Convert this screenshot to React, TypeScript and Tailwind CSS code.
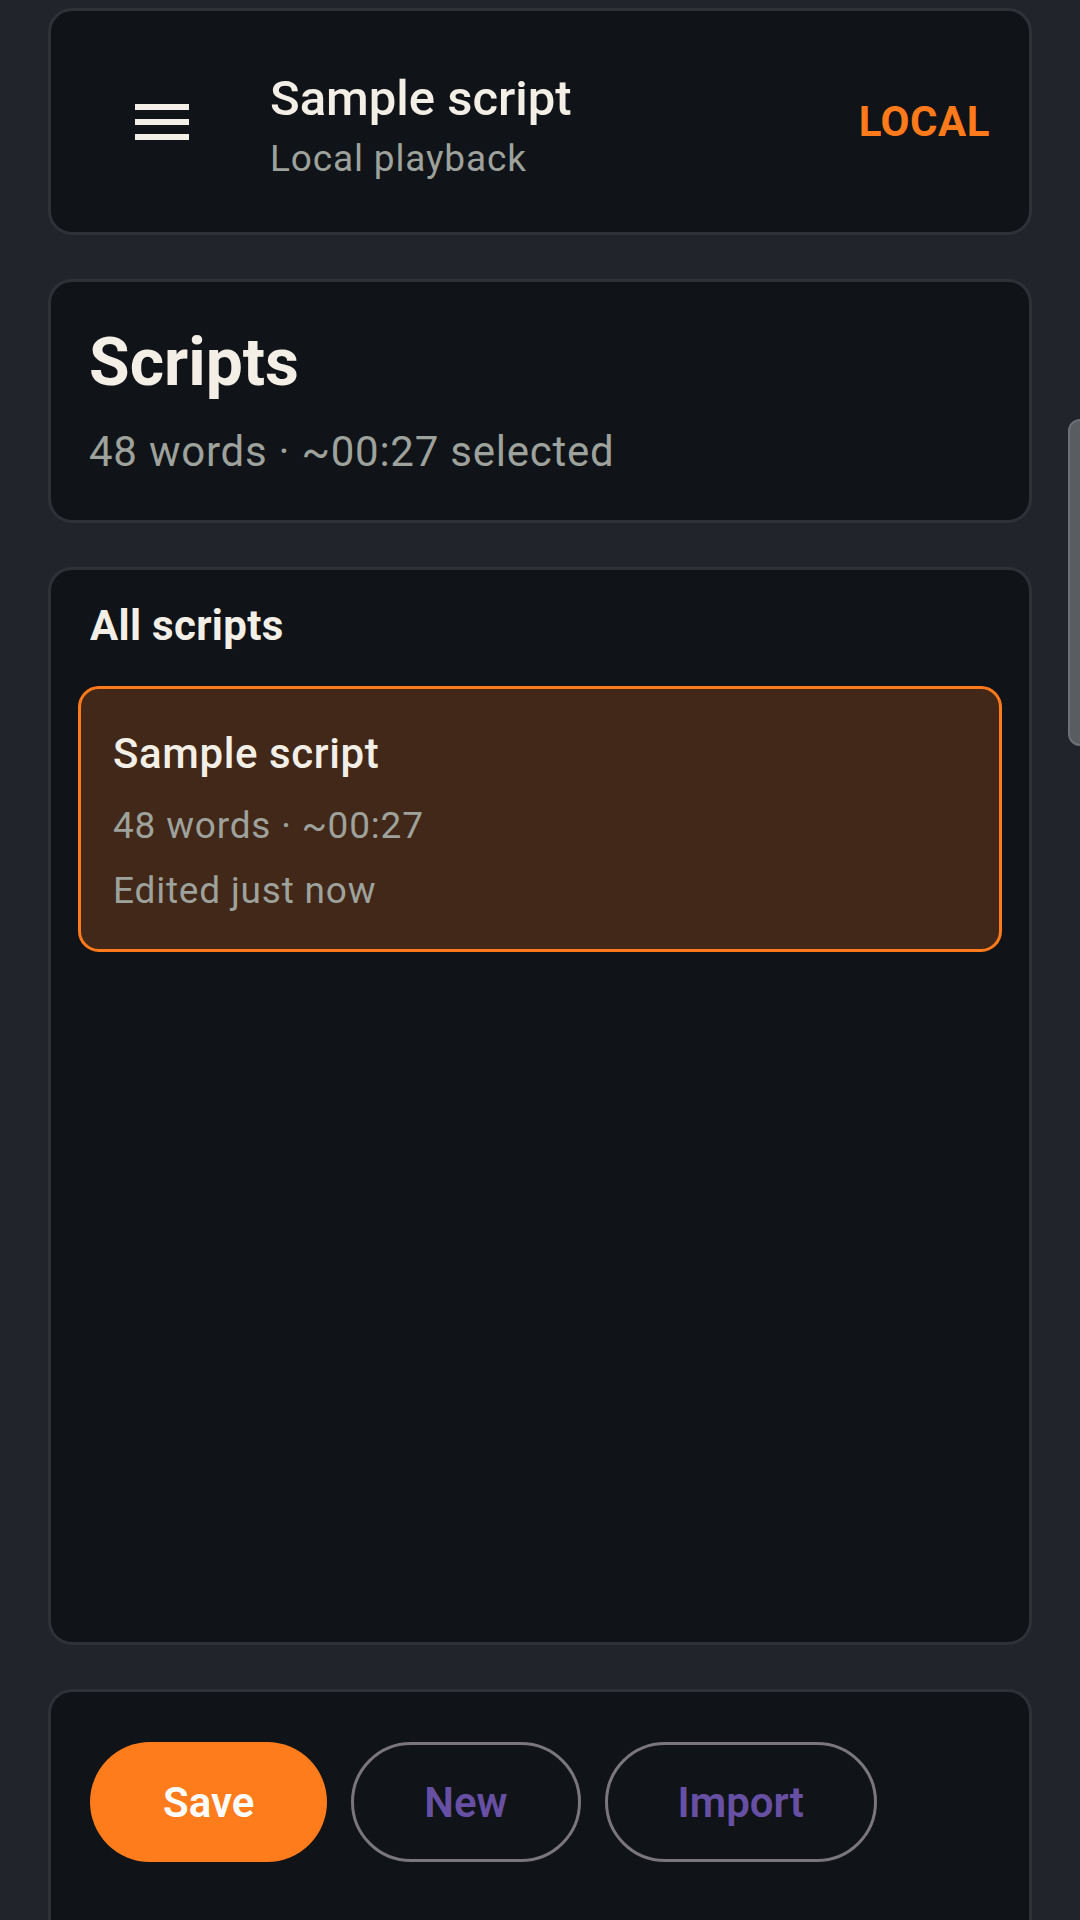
import React from "react";

function MenuIcon() {
  return (
    <svg width="72" height="72" viewBox="0 0 24 24" fill="#f3efe6">
      <path d="M3 18h18v-2H3v2zm0-5h18v-2H3v2zm0-7v2h18V6H3z" />
    </svg>
  );
}

export default function App() {
  return (
    <div
      className="relative h-[1920px] w-[1080px] overflow-hidden bg-[#21242b]"
      style={{ fontFamily: "Roboto, 'Noto Sans', sans-serif" }}
    >
      <div className="flex flex-col gap-[44px] px-[48px] pt-[8px]">
        {/* Header card */}
        <div className="flex h-[227px] items-center rounded-[24px] border-[3px] border-[#2e3136] bg-[#101317] pl-[75px] pr-[39px]">
          <MenuIcon />
          <div className="ml-[72px] mt-[7px] flex flex-1 flex-col">
            <div className="text-[49px] font-medium leading-[56px] text-[#f3efe6]">Sample script</div>
            <div className="mt-[10px] text-[37px] leading-[43px] tracking-[0.85px] text-[#9ea29c]">Local playback</div>
          </div>
          <div className="text-[42px] font-bold leading-[49px] tracking-[0.5px] text-[#ff7a1a]">LOCAL</div>
        </div>

        {/* Scripts summary card */}
        <div className="flex h-[244px] flex-col rounded-[24px] border-[3px] border-[#2e3136] bg-[#101317] px-[38px] pt-[42px]">
          <div className="text-[66px] font-bold leading-[78px] text-[#f3efe6]">Scripts</div>
          <div className="mt-[25px] text-[42px] leading-[49px] tracking-[0.75px] text-[#9ea29c]">48 words · ~00:27 selected</div>
        </div>

        {/* All scripts list */}
        <div className="flex h-[1078px] flex-col rounded-[24px] border-[3px] border-[#2e3136] bg-[#101317] pt-[31px]">
          <div className="px-[39px] text-[42px] font-bold leading-[49px] tracking-[0.3px] text-[#f3efe6]">All scripts</div>
          <div className="mx-[27px] mt-[36px] flex flex-col rounded-[21px] border-[3px] border-[#ff7a1a] bg-[#422819] pb-[37px] pl-[32px] pt-[40px]">
            <div className="text-[42px] font-medium leading-[49px] tracking-[0.6px] text-[#f3efe6]">Sample script</div>
            <div className="mt-[26px] text-[37px] leading-[43px] tracking-[0.8px] text-[#9ea29c]">48 words · ~00:27</div>
            <div className="mt-[22px] text-[37px] leading-[43px] tracking-[0.8px] text-[#9ea29c]">Edited just now</div>
          </div>
        </div>

        {/* Actions card */}
        <div className="flex h-[400px] items-start gap-[24px] rounded-[24px] border-[3px] border-[#2e3136] bg-[#101317] pl-[39px] pt-[50px]">
          <button className="flex h-[120px] items-center justify-center rounded-full bg-[#ff7c1c] px-[73px] text-[42px] font-semibold text-white">
            Save
          </button>
          <button className="flex h-[120px] items-center justify-center rounded-full border-[3px] border-[#7a767d] px-[70px] text-[42px] font-semibold text-[#6750a4]">
            New
          </button>
          <button className="flex h-[120px] items-center justify-center rounded-full border-[3px] border-[#7a767d] px-[70px] text-[42px] font-semibold text-[#6750a4]">
            Import
          </button>
        </div>
      </div>

      {/* Scrollbar thumb */}
      <div className="absolute left-[1068px] top-[419px] h-[327px] w-[24px] rounded-[12px] border-[2px] border-[#6d7074] bg-[#595c61]" />
    </div>
  );
}
